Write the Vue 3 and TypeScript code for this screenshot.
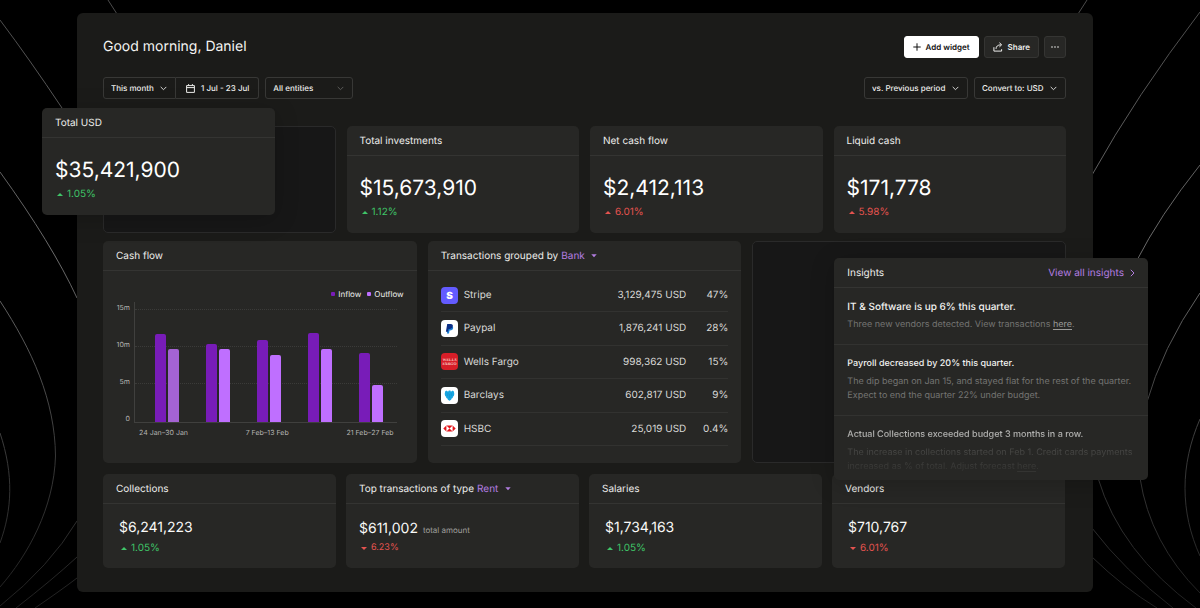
<script setup lang="ts">
interface Stat {
  title: string
  value: string
  change: string
  direction: 'up' | 'down'
  tone: 'good' | 'bad'
}

interface BankRow {
  id: 'stripe' | 'paypal' | 'wells' | 'barclays' | 'hsbc'
  name: string
  amount: string
  share: string
}

interface Period {
  inflow: number
  outflow: number
  muted?: boolean
}

const headline: Stat = { title: 'Total USD', value: '$35,421,900', change: '1.05%', direction: 'up', tone: 'good' }

const stats: Stat[] = [
  { title: 'Total investments', value: '$15,673,910', change: '1.12%', direction: 'up', tone: 'good' },
  { title: 'Net cash flow', value: '$2,412,113', change: '6.01%', direction: 'up', tone: 'bad' },
  { title: 'Liquid cash', value: '$171,778', change: '5.98%', direction: 'up', tone: 'bad' },
]

const collections: Stat = { title: 'Collections', value: '$6,241,223', change: '1.05%', direction: 'up', tone: 'good' }

const totals: Stat[] = [
  { title: 'Salaries', value: '$1,734,163', change: '1.05%', direction: 'up', tone: 'good' },
  { title: 'Vendors', value: '$710,767', change: '6.01%', direction: 'down', tone: 'bad' },
]

const banks: BankRow[] = [
  { id: 'stripe', name: 'Stripe', amount: '3,129,475 USD', share: '47%' },
  { id: 'paypal', name: 'Paypal', amount: '1,876,241 USD', share: '28%' },
  { id: 'wells', name: 'Wells Fargo', amount: '998,362 USD', share: '15%' },
  { id: 'barclays', name: 'Barclays', amount: '602,817 USD', share: '9%' },
  { id: 'hsbc', name: 'HSBC', amount: '25,019 USD', share: '0.4%' },
]

const axisMax = 16
const periods: Period[] = [
  { inflow: 11.7, outflow: 9.7, muted: true },
  { inflow: 10.4, outflow: 9.7 },
  { inflow: 10.9, outflow: 8.9 },
  { inflow: 11.9, outflow: 9.7 },
  { inflow: 9.2, outflow: 4.9 },
]
const ticks = ['15m', '10m', '5m', '0']
const rangeLabels = ['24 Jan–30 Jan', '7 Feb–13 Feb', '21 Feb–27 Feb']

const barHeight = (value: number) => ({ height: `${(value / axisMax) * 100}%` })
</script>

<template>
  <div class="stage">
    <svg class="waves" viewBox="0 0 1200 608" preserveAspectRatio="none" aria-hidden="true">
      <defs>
        <linearGradient id="wave" gradientUnits="userSpaceOnUse" x1="0" y1="0" x2="0" y2="608">
          <stop offset="0" stop-color="#4a4a4a" />
          <stop offset="0.42" stop-color="#6c6c6c" />
          <stop offset="0.75" stop-color="#383838" />
          <stop offset="1" stop-color="#202020" />
        </linearGradient>
      </defs>
      <g fill="none" stroke="url(#wave)" stroke-width="1">
        <path d="M108 0L117 14" />
        <path d="M0 20Q30 60 62 108L80 136" />
        <path d="M0 172Q52 244 77 298" />
        <path d="M0 301C32 350 55 400 55.500 456C54 508 28 555 0 587" />
        <path d="M0 433C14 475 12 510 0 543" />
        <path d="M77 521Q50 566 0 606" />
        <path d="M77 557Q52 580 16 608" />
        <path d="M77 578Q60 591 35 608" />
        <path d="M1087 0L1078 14" />
        <path d="M1200 12Q1136 96 1092 175" />
        <path d="M1200 165Q1160 215 1136 262" />
        <path d="M1200 293Q1162 348 1146 405" />
        <path d="M1200 419C1180 465 1180 512 1200 556" />
        <path d="M1140 478Q1150 543 1200 593" />
        <path d="M1098 478Q1120 552 1196 608" />
        <path d="M1092 528Q1124 570 1173 608" />
        <path d="M1092 557Q1124 588 1157 608" />
      </g>
    </svg>

    <main class="panel">
      <header class="top">
        <h1>Good morning, Daniel</h1>
        <div class="actions">
          <button type="button" class="btn primary">
            <svg width="8" height="8" viewBox="0 0 8 8" aria-hidden="true"><path d="M4 .3v7.400M.3 4h7.400" /></svg>
            Add widget
          </button>
          <button type="button" class="btn">
            <svg width="10" height="10" viewBox="0 0 10 10" aria-hidden="true">
              <path d="M.9 5.200v3.900h7.700V7.200M3 6.900c.1-2.500 1.600-4 4.900-4.100M6.400 .7l2.300 2.100-2.300 2.100" />
            </svg>
            Share
          </button>
          <button type="button" class="btn more" aria-label="More options">
            <svg width="8" height="2" viewBox="0 0 8 2" aria-hidden="true">
              <circle cx="1" cy="1" r=".8" /><circle cx="4" cy="1" r=".8" /><circle cx="7" cy="1" r=".8" />
            </svg>
          </button>
        </div>
      </header>

      <div class="filters">
        <div class="joined">
          <label class="picker">
            <select aria-label="Period"><option>This month</option></select>
            <svg class="chev" width="7" height="5" viewBox="0 0 7 5" aria-hidden="true"><path d="M.7 .9l2.800 2.800L6.300 .9" /></svg>
          </label>
          <button type="button" class="range">
            <svg width="9" height="9" viewBox="0 0 9 9" aria-hidden="true"><path d="M.6 1.600h7.800v6.800H.6zM.6 3.600h7.800M2.600 .1v1.500M6.400 .1v1.500" /></svg>
            1 Jul - 23 Jul
          </button>
        </div>
        <label class="picker entities">
          <select aria-label="Entities"><option>All entities</option></select>
          <svg class="chev dim" width="7" height="5" viewBox="0 0 7 5" aria-hidden="true"><path d="M.7 .9l2.800 2.800L6.300 .9" /></svg>
        </label>
        <span class="grow"></span>
        <label class="picker">
          <select aria-label="Compare with"><option>vs. Previous period</option></select>
          <svg class="chev" width="7" height="5" viewBox="0 0 7 5" aria-hidden="true"><path d="M.7 .9l2.800 2.800L6.300 .9" /></svg>
        </label>
        <label class="picker">
          <select aria-label="Currency"><option>Convert to: USD</option></select>
          <svg class="chev" width="7" height="5" viewBox="0 0 7 5" aria-hidden="true"><path d="M.7 .9l2.800 2.800L6.300 .9" /></svg>
        </label>
      </div>

      <div class="row four">
        <div class="slot">
          <section class="card stat lifted total">
            <h2>{{ headline.title }}</h2>
            <div class="body">
              <p class="value">{{ headline.value }}</p>
              <p class="change" :class="[headline.tone, headline.direction]">{{ headline.change }}</p>
            </div>
          </section>
        </div>
        <section v-for="s in stats" :key="s.title" class="card stat">
          <h2>{{ s.title }}</h2>
          <div class="body">
            <p class="value">{{ s.value }}</p>
            <p class="change" :class="[s.tone, s.direction]">{{ s.change }}</p>
          </div>
        </section>
      </div>

      <div class="row three">
        <section class="card">
          <h2>Cash flow</h2>
          <div class="chart">
            <div class="legend">
              <span class="in">Inflow</span>
              <span class="out">Outflow</span>
            </div>
            <div class="plot">
              <div class="ticks"><span v-for="t in ticks" :key="t">{{ t }}</span></div>
              <div class="area">
                <div class="lines"><i></i><i></i><i></i></div>
                <div v-for="(p, i) in periods" :key="i" class="pair">
                  <span class="bar in" :style="barHeight(p.inflow)"></span>
                  <span class="bar out" :class="{ muted: p.muted }" :style="barHeight(p.outflow)"></span>
                </div>
              </div>
            </div>
            <div class="ranges"><span v-for="r in rangeLabels" :key="r">{{ r }}</span></div>
          </div>
        </section>

        <section class="card">
          <h2>
            Transactions grouped by
            <label class="inline-pick">
              <select aria-label="Group by"><option>Bank</option></select>
              <svg width="6" height="4" viewBox="0 0 6 4" aria-hidden="true"><path d="M.3 .3h5.400L3 3.300z" /></svg>
            </label>
          </h2>
          <div class="bank-wrap">
            <table>
              <tbody>
                <tr v-for="b in banks" :key="b.id">
                  <td class="logo">
                    <svg width="17" height="17" viewBox="0 0 17 17" aria-hidden="true">
                      <template v-if="b.id === 'stripe'">
                        <rect width="17" height="17" rx="4" fill="#635bff" />
                        <text x="8.500" y="12.200" text-anchor="middle" font-size="10" font-weight="900" fill="#fff">S</text>
                      </template>
                      <template v-else-if="b.id === 'paypal'">
                        <rect width="17" height="17" rx="4" fill="#fff" />
                        <path d="M7.200 6.200h3.700c1.300.4 1.500 1.400 1.100 2.500-.4 1.300-1.500 1.700-2.900 1.700h-.6l-.5 3H5.900z" fill="#1a82d6" />
                        <path d="M6.200 4h3.500c1.700 0 2.500 1 2.100 2.500-.4 1.700-1.600 2.400-3.200 2.400h-1L7 11.800H4.900z" fill="#0b2f86" />
                      </template>
                      <template v-else-if="b.id === 'wells'">
                        <rect width="17" height="17" rx="4" fill="#d71e28" />
                        <g class="wells" text-anchor="middle" font-size="4" font-weight="700" fill="#f6c9c4">
                          <text x="8.500" y="8">WELLS</text>
                          <text x="8.500" y="12">FARGO</text>
                        </g>
                      </template>
                      <template v-else-if="b.id === 'barclays'">
                        <rect width="17" height="17" rx="4" fill="#fff" />
                        <path d="M7.800 3.400h1.600l.3 1.100 1.100-.2.900-.7 1.200 1 .4 2.300-.5 2-.9.9-.2 1.200-1.100.5-.5 1.200-1.600 1-1.600-1-.5-1.200-1.100-.5-.2-1.200-.9-.9-.5-2 .4-2.300 1.200-1 .9.700 1.100.2z" fill="#18a5e0" />
                        <path d="M7 6l-.4 3M10.200 6l.4 3M8.600 7v4" stroke="#0c8bca" stroke-width=".5" />
                      </template>
                      <template v-else>
                        <rect width="17" height="17" rx="4" fill="#fff" />
                        <path d="M2.300 8.500L5.400 5.400v6.200zM14.700 8.500L11.600 5.400v6.200zM5.400 5.400h6.200L8.500 8.500zM5.400 11.600h6.200L8.500 8.500z" fill="#e3141a" />
                      </template>
                    </svg>
                  </td>
                  <td>{{ b.name }}</td>
                  <td class="num">{{ b.amount }}</td>
                  <td class="num share">{{ b.share }}</td>
                </tr>
              </tbody>
            </table>
          </div>
        </section>

        <div class="slot">
          <section class="card lifted insights">
            <h2>
              Insights
              <a href="#insights">View all insights
                <svg width="5" height="8" viewBox="0 0 5 8" aria-hidden="true"><path d="M.8 .8L4 4 .8 7.200" /></svg>
              </a>
            </h2>
            <article>
              <h3 class="lead">IT &amp; Software is up 6% this quarter.</h3>
              <p>Three new vendors detected. View transactions <a href="#vendors">here</a>.</p>
            </article>
            <article>
              <h3>Payroll decreased by 20% this quarter.</h3>
              <p>The dip began on Jan 15, and stayed flat for the rest of the quarter. Expect to end the quarter 22% under budget.</p>
            </article>
            <article class="fading">
              <h3>Actual Collections exceeded budget 3 months in a row.</h3>
              <p>The increase in collections started on Feb 1. Credit cards payments increased as % of total. Adjust forecast <a href="#forecast">here</a>.</p>
            </article>
          </section>
        </div>
      </div>

      <div class="row four bottom">
        <section class="card mini">
          <h2>{{ collections.title }}</h2>
          <div class="body">
            <p class="value">{{ collections.value }}</p>
            <p class="change" :class="[collections.tone, collections.direction]">{{ collections.change }}</p>
          </div>
        </section>
        <section class="card mini rent">
          <h2>
            Top transactions of type
            <label class="inline-pick">
              <select aria-label="Transaction type"><option>Rent</option></select>
              <svg width="6" height="4" viewBox="0 0 6 4" aria-hidden="true"><path d="M.3 .3h5.400L3 3.300z" /></svg>
            </label>
          </h2>
          <div class="body">
            <p class="value">$611,002 <small>total amount</small></p>
            <p class="change bad down">6.23%</p>
          </div>
        </section>
        <section v-for="s in totals" :key="s.title" class="card mini">
          <h2>{{ s.title }}</h2>
          <div class="body">
            <p class="value">{{ s.value }}</p>
            <p class="change" :class="[s.tone, s.direction]">{{ s.change }}</p>
          </div>
        </section>
      </div>
    </main>
  </div>
</template>

<style>
html,
body {
  background: #000;
}
</style>

<style scoped>
* {
  box-sizing: border-box;
}

.stage {
  position: relative;
  min-height: 100vh;
  padding: 13px 107px 16px 77px;
  overflow: hidden;
  background: #000;
  color: #ededeb;
  font-family: Inter, "Liberation Sans", sans-serif;
  font-size: 10px;
  text-rendering: geometricPrecision;
}

h1,
h2,
h3,
p {
  margin: 0;
  font-weight: 400;
}

svg {
  flex: none;
  display: block;
}

.waves {
  position: absolute;
  inset: 0;
  width: 100%;
  height: 100%;
}

.panel {
  position: relative;
  padding: 23px 27px 24px 26px;
  border-radius: 6px;
  background: #1b1b19;
}

.top,
.actions,
.filters,
.joined {
  display: flex;
  align-items: center;
}

.top {
  justify-content: space-between;
}

h1 {
  font-size: 14px;
  line-height: 22px;
  color: #f4f4f2;
}

.actions {
  gap: 5px;
}

button,
select {
  margin: 0;
  font: inherit;
  color: inherit;
  cursor: pointer;
  text-rendering: inherit;
}

.btn {
  display: flex;
  align-items: center;
  gap: 5px;
  height: 22px;
  padding: 0 8px;
  border: 1px solid #353533;
  border-radius: 3px;
  background: #272725;
  font-size: 8px;
  font-weight: 600;
}

.btn svg {
  fill: none;
  stroke: currentColor;
}

.primary {
  border-color: #fff;
  background: #fff;
  color: #111;
}

.more {
  padding: 0 6px;
}

.more svg {
  fill: currentColor;
  stroke: none;
}

.filters {
  gap: 6px;
  margin: 19px 0 27px;
  font-size: 8px;
  font-weight: 500;
}

.grow {
  flex: 1;
}

.picker {
  position: relative;
  display: block;
}

.picker select {
  appearance: none;
  display: block;
  height: 22px;
  padding: 0 21px 0 7px;
  border: 1px solid #383836;
  border-radius: 3px;
  background: transparent;
}

.picker .chev {
  position: absolute;
  right: 9px;
  top: 9px;
  fill: none;
  stroke: #d6d6d4;
  pointer-events: none;
}

.picker .dim {
  stroke: #5c5c5a;
}

.joined .picker select {
  border-radius: 3px 0 0 3px;
}

.range {
  display: flex;
  align-items: center;
  gap: 6px;
  height: 22px;
  padding: 0 9px 0 10px;
  border: 1px solid #383836;
  border-left: 0;
  border-radius: 0 3px 3px 0;
  background: transparent;
}

.range svg {
  fill: none;
  stroke: currentColor;
}

.entities select {
  width: 88px;
}

.row {
  display: grid;
  gap: 11px;
}

.four {
  grid-template-columns: repeat(4, minmax(0, 1fr));
}

.three {
  grid-template-columns: repeat(3, minmax(0, 1fr));
  min-height: 222px;
  margin: 8px 0 11px;
}

.bottom {
  gap: 10px;
  padding-right: 1px;
}

.card {
  min-width: 0;
  border-radius: 5px;
  background: #272725;
}

.card h2 {
  display: flex;
  align-items: center;
  height: 30px;
  padding: 0 13px;
  border-bottom: 1px solid #343432;
  font-size: 10px;
}

.slot {
  position: relative;
  border: 1px solid #2a2a2a;
  border-radius: 5px;
  background: #171717;
}

.lifted {
  position: absolute;
  z-index: 1;
  width: calc(100% + 2px);
  box-shadow: 0 4px 24px rgba(0, 0, 0, 0.2);
}

.total {
  left: -62px;
  top: -19px;
}

.insights {
  left: 81px;
  top: 16px;
  height: 222px;
}

.stat .body {
  padding: 19px 13px 14px;
}

.stat .value {
  font-size: 21px;
  line-height: 28px;
  color: #fff;
}

.change {
  display: flex;
  align-items: center;
  gap: 4px;
  padding-left: 2px;
  margin-top: 2px;
  line-height: 14px;
}

.change::before {
  content: "";
  border: 3px solid transparent;
  border-top-width: 0;
  border-bottom-color: currentColor;
}

.change.down::before {
  border-top-width: 3px;
  border-bottom-width: 0;
  border-top-color: currentColor;
}

.good {
  color: #3fc568;
}

.bad {
  color: #e5534f;
}

.mini .body {
  padding: 15px 16px 13px;
}

.mini .value {
  font-size: 14px;
  line-height: 18px;
  color: #fafaf8;
}

.mini .change {
  margin-top: 4px;
}

.rent .body {
  padding: 16px 13px 13px;
}

.rent small {
  margin-left: 1px;
  font-size: 8px;
  line-height: 1;
  color: #a0a09e;
}

.rent .change {
  margin-top: 3px;
  font-size: 9px;
}

.chart {
  padding: 16px 13px 0;
}

.legend {
  display: flex;
  justify-content: flex-end;
  gap: 6px;
  font-size: 8px;
  line-height: 14px;
}

.legend span {
  display: flex;
  align-items: center;
  gap: 3px;
}

.legend span::before {
  content: "";
  width: 4px;
  height: 4px;
  border-radius: 1px;
}

.legend .in::before,
.bar.in {
  background: #781cb8;
}

.legend .out::before,
.bar.out {
  background: #bf6fff;
}

.bar.muted {
  background: #a463d3;
}

.plot {
  display: flex;
  gap: 4px;
  margin-right: 7px;
}

.ticks {
  width: 14px;
  text-align: right;
  font-size: 7px;
  color: #b4b4b2;
}

.ticks span {
  display: block;
  height: 37px;
  line-height: 14px;
}

.ticks span:last-child {
  height: 14px;
}

.area {
  position: relative;
  flex: 1;
  display: flex;
  justify-content: space-between;
  align-items: flex-end;
  height: 121px;
  margin-top: 1px;
  padding: 0 14px 0 20px;
  border: solid #40403e;
  border-width: 0 0 1px 1px;
}

.lines {
  position: absolute;
  inset: 7px 0 0;
}

.lines i {
  display: block;
  height: 37px;
  border-top: 1px dotted #3b3b39;
}

.pair {
  position: relative;
  display: flex;
  align-items: flex-end;
  gap: 2px;
  height: 100%;
}

.bar {
  width: 11px;
  border-radius: 2px 2px 0 0;
}

.ranges {
  display: flex;
  justify-content: space-between;
  padding: 1px 10px 0 23px;
  font-size: 7px;
  line-height: 12px;
  color: #b4b4b2;
}

.inline-pick {
  display: flex;
  align-items: center;
  gap: 6px;
  margin-left: 3px;
  color: #b27de0;
}

.inline-pick select {
  appearance: none;
  padding: 0;
  border: 0;
  background: transparent;
}

.inline-pick svg {
  fill: currentColor;
}

.bank-wrap {
  padding: 8px 13px 0;
}

table {
  width: 100%;
  height: 167px;
  border-collapse: collapse;
  color: #d9d9d7;
}

td {
  padding: 0;
  border-bottom: 1px solid #323230;
  vertical-align: middle;
}

.logo {
  width: 23px;
}

.wells {
  font-family: "Liberation Serif", serif;
}

.num {
  text-align: right;
}

.share {
  width: 42px;
}

.insights h2 {
  justify-content: space-between;
}

.insights h2 a {
  display: flex;
  align-items: center;
  gap: 6px;
  color: #b27de0;
  text-decoration: none;
}

.insights h2 svg {
  fill: none;
  stroke: currentColor;
}

article {
  padding: 12px 13px;
  border-bottom: 1px solid #323230;
}

article h3 {
  font-weight: 500;
  font-size: 9px;
  line-height: 14px;
  margin-bottom: 4px;
  color: #f2f2f0;
}

article .lead {
  font-size: 10px;
}

article p {
  font-size: 9px;
  line-height: 14px;
  color: #747472;
}

article p a {
  color: #9a9a98;
  text-underline-offset: 2px;
}

.fading {
  border-bottom: 0;
  padding-bottom: 0;
  -webkit-mask-image: linear-gradient(#000 0, rgba(0, 0, 0, 0.45) 30px, rgba(0, 0, 0, 0.1) 62px);
  mask-image: linear-gradient(#000 0, rgba(0, 0, 0, 0.45) 30px, rgba(0, 0, 0, 0.1) 62px);
}

.fading a {
  color: inherit;
}
</style>
